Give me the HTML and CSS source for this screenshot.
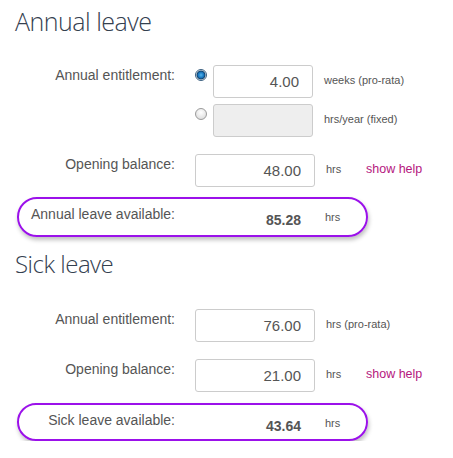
FILE: index.html
```html
<!DOCTYPE html>
<html lang="en">
<head>
    <meta charset="UTF-8">
    <title>Leave entitlement</title>
    <link rel="stylesheet" href="styles.css">
</head>
<body>
    <div class="leave">
        <!-- Annual leave -->
        <h2 class="title">Annual leave</h2>

        <div class="row">
            <label class="label">Annual entitlement:</label>
            <input class="radio" type="radio" name="annual" checked>
            <input class="field short" type="text" value="4.00">
            <span class="unit">weeks (pro-rata)</span>
        </div>
        <div class="row">
            <span class="label"></span>
            <input class="radio" type="radio" name="annual">
            <input class="field short" type="text" value="" disabled>
            <span class="unit">hrs/year (fixed)</span>
        </div>
        <div class="row row-gap">
            <label class="label">Opening balance:</label>
            <input class="field" type="text" value="48.00">
            <span class="unit unit-hrs">hrs</span>
            <a class="help" href="#">show help</a>
        </div>
        <div class="total">
            <span class="label">Annual leave available:</span>
            <span class="amount">85.28</span>
            <span class="unit">hrs</span>
        </div>

        <!-- Sick leave -->
        <h2 class="title title-sick">Sick leave</h2>

        <div class="row">
            <label class="label">Annual entitlement:</label>
            <input class="field" type="text" value="76.00">
            <span class="unit">hrs (pro-rata)</span>
        </div>
        <div class="row row-gap">
            <label class="label">Opening balance:</label>
            <input class="field" type="text" value="21.00">
            <span class="unit unit-hrs">hrs</span>
            <a class="help" href="#">show help</a>
        </div>
        <div class="total total-sick">
            <span class="label">Sick leave available:</span>
            <span class="amount">43.64</span>
            <span class="unit">hrs</span>
        </div>
    </div>
</body>
</html>
```

FILE: styles.css
```css
* {
    box-sizing: border-box;
    margin: 0;
    padding: 0;
}

body {
    background: #fff;
    font-family: "Liberation Sans", Arial, sans-serif;
    color: #555;
}

.leave {
    padding: 6px 15px 0;
}

/* Headings */
.title {
    font-family: "Open Sans", sans-serif;
    font-weight: 300;
    font-size: 25px;
    line-height: 30px;
    letter-spacing: -0.5px;
    color: #34404f;
    margin-bottom: 29px;
}

.title-sick {
    font-size: 24px;
    margin-top: 12px;
    margin-bottom: 30px;
}

/* Form rows */
.row {
    display: flex;
    align-items: flex-start;
    height: 33px;
    margin-bottom: 6px;
}

.row-gap {
    margin-top: 17px;
}

.label {
    width: 160px;
    flex-shrink: 0;
    text-align: right;
    font-size: 14px;
    line-height: 16px;
    padding-top: 2px;
    margin-right: 20px;
    color: #555;
}

.radio {
    appearance: none;
    width: 12px;
    height: 12px;
    margin: 4px 6px 0 0;
    border-radius: 50%;
    border: 1px solid #9a9a9a;
    background: radial-gradient(circle at 50% 35%, #fff, #d6d6d6);
}

.radio:checked {
    border-color: #3a5f80;
    background: radial-gradient(circle, #4fb6f0 0, #1670b8 3px, #0e3e66 4px, #fff 5px, #e0e0e0 6px);
}

.field {
    width: 120px;
    height: 33px;
    border: 1px solid #ccc;
    border-radius: 3px;
    padding: 0 13px;
    text-align: right;
    font-family: "Liberation Sans", Arial, sans-serif;
    font-size: 15px;
    color: #555;
    background: #fff;
}

.short {
    width: 100px;
}

.field:disabled {
    background: #eee;
}

.unit {
    font-size: 11px;
    line-height: 13px;
    padding-top: 9px;
    margin-left: 11px;
    color: #555;
}

.unit-hrs {
    width: 40px;
}

.help {
    font-size: 12.5px;
    line-height: 15px;
    padding-top: 8px;
    color: #b5177e;
    text-decoration: none;
}

/* Available totals */
.total {
    display: flex;
    align-items: flex-start;
    width: 351px;
    height: 40px;
    margin-top: 10px;
    margin-left: 2px;
    border: 2px solid #9b11ea;
    border-radius: 20px;
    box-shadow: 1px 3px 4px rgba(0, 0, 0, 0.25);
}

.total-sick {
    height: 38px;
    margin-top: 11px;
}

.total .label {
    width: 156px;
    padding-top: 7px;
}

.amount {
    width: 120px;
    padding: 13px 14px 0 0;
    text-align: right;
    font-size: 14px;
    font-weight: bold;
    color: #555;
}

.total .unit {
    padding-top: 12px;
    margin-left: 10px;
}
```
